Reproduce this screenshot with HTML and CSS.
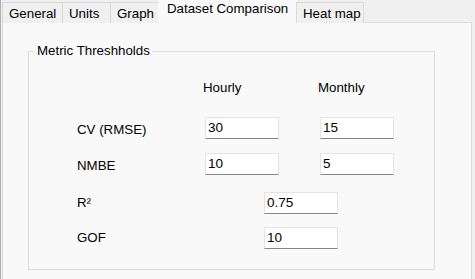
FILE: index.html
```html
<!DOCTYPE html>
<html>
<head>
<meta charset="utf-8">
<link rel="stylesheet" href="styles.css">
</head>
<body>
<div class="window">
  <div class="tabs">
    <div class="tab t-general">General</div>
    <div class="tab t-units">Units</div>
    <div class="tab t-graph">Graph</div>
    <div class="tab tab-active t-dataset">Dataset Comparison</div>
    <div class="tab t-heat">Heat map</div>
  </div>
  <div class="panel">
    <fieldset class="group">
      <legend class="group-title">Metric Threshholds</legend>
      <div class="row row-head">
        <div class="label-col"></div>
        <div class="head-cell">Hourly</div>
        <div class="head-cell head-second">Monthly</div>
      </div>
      <div class="row row-cv">
        <div class="label-col label label-low">CV (RMSE)</div>
        <div class="field">30</div>
        <div class="field field-second">15</div>
      </div>
      <div class="row row-nmbe">
        <div class="label-col label label-low">NMBE</div>
        <div class="field">10</div>
        <div class="field field-second">5</div>
      </div>
      <div class="row row-r2">
        <div class="label-wide label">R²</div>
        <div class="field">0.75</div>
      </div>
      <div class="row row-gof">
        <div class="label-wide label">GOF</div>
        <div class="field">10</div>
      </div>
    </fieldset>
  </div>
</div>
</body>
</html>
```

FILE: styles.css
```css
html, body {
  margin: 0;
  padding: 0;
}
body {
  background: #f0f0f0;
  font-family: "Liberation Sans", Arial, sans-serif;
  font-size: 13.3px;
  color: #000;
  width: 475px;
  height: 279px;
  overflow: hidden;
}
.window {
  border-left: 1px solid #b0b0b0;
  padding-left: 1px;
  height: 279px;
  box-sizing: border-box;
}
.tabs {
  display: flex;
  height: 22px;
  align-items: flex-end;
  position: relative;
  z-index: 1;
}
.tab {
  box-sizing: border-box;
  height: 21px;
  margin-bottom: -1px;
  border: 1px solid #d9d9d9;
  border-bottom: none;
  background: #f0f0f0;
  line-height: 15px;
  padding: 3px 0 0 6px;
  white-space: nowrap;
  margin-right: -1px;
}
.t-general { width: 61px; padding-left: 6px; }
.t-units { width: 49px; }
.t-graph { width: 49px; }
.t-heat { width: 68px; }
.tab-active {
  width: 139px;
  height: 23px;
  background: #f9f9f9;
  border-color: #f9f9f9;
  padding: 0 0 0 8px;
}
.panel {
  box-sizing: border-box;
  width: 470px;
  height: 257px;
  background: #f9f9f9;
  border: 1px solid #dcdcdc;
  border-bottom: none;
  padding: 20px 0 0 25px;
}
.group {
  box-sizing: border-box;
  width: 407px;
  margin: 0;
  border: 1px solid #dcdcdc;
  padding: 0 0 20px 48px;
  min-width: 0;
}
.group-title {
  margin-left: -42px;
  padding: 0 2px;
  line-height: 16px;
}
.row {
  display: flex;
  align-items: flex-start;
}
.row-head { margin-top: 21px; line-height: 15px; }
.row-cv { margin-top: 22px; }
.row-nmbe { margin-top: 14px; }
.row-r2 { margin-top: 17px; }
.row-gof { margin-top: 13px; }
.label-col {
  width: 128px;
  flex: none;
}
.label-wide {
  width: 187px;
  flex: none;
}
.label {
  line-height: 15px;
  padding-top: 3px;
}
.label-low {
  padding-top: 5px;
}
.head-cell {
  width: 73px;
  margin-left: -2px;
  margin-right: 2px;
}
.head-second { margin-left: 40px; }
.field {
  box-sizing: border-box;
  width: 74px;
  height: 22px;
  background: #fff;
  border: 1px solid #e4e4e4;
  border-bottom: 1px solid #868686;
  padding: 2px 0 0 2px;
  line-height: 16px;
  font-size: 13.5px;
  flex: none;
}
.field-second { margin-left: 41px; }
```
